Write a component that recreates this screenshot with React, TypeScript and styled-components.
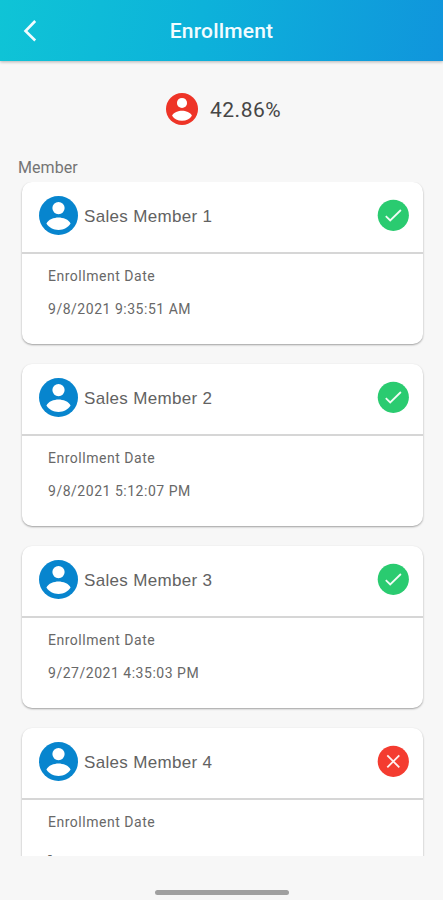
import React from "react";
import styled, { createGlobalStyle } from "styled-components";

const GlobalStyle = createGlobalStyle`
  * { box-sizing: border-box; }
  body { margin: 0; background: #f7f7f7; font-family: Roboto, "Liberation Sans", sans-serif; }
`;

const Screen = styled.div`
  display: flex;
  flex-direction: column;
  width: 443px;
  height: 900px;
  overflow: hidden;
  background: #f7f7f7;
`;

const Header = styled.header`
  display: grid;
  grid-template-columns: 60px 1fr 60px;
  align-items: center;
  flex: none;
  height: 61px;
  background: linear-gradient(100deg, #0fc4d6 0%, #0db2da 45%, #1095dc 100%);
  box-shadow: 0 1px 3px rgba(0, 0, 0, 0.28);
`;

const BackButton = styled.button`
  display: flex;
  width: 60px;
  height: 61px;
  padding: 19px 0 0 23px;
  border: 0;
  background: none;
`;

const Title = styled.h1`
  margin: 1px 0 0;
  color: #f2fcff;
  font-size: 21px;
  font-weight: 500;
  line-height: 24px;
  letter-spacing: 0.2px;
  text-align: center;
`;

const Summary = styled.div`
  display: flex;
  align-items: center;
  gap: 12px;
  flex: none;
  height: 96px;
  padding-left: 166px;
`;

const Percent = styled.span`
  margin-top: 1px;
  color: #464646;
  font-size: 21px;
  line-height: 24px;
  letter-spacing: 0.5px;
`;

const SectionLabel = styled.div`
  flex: none;
  height: 25px;
  padding-left: 18px;
  color: #747474;
  font-size: 16px;
  line-height: 21px;
  letter-spacing: 0.05px;
`;

const List = styled.main`
  display: flex;
  flex-direction: column;
  gap: 20px;
  flex: none;
  height: 674px;
  padding: 0 20px 0 22px;
  overflow: hidden;
`;

const Card = styled.article`
  flex: none;
  height: 162px;
  border-radius: 10px;
  background: #fff;
  box-shadow: 0 1px 2px rgba(0, 0, 0, 0.36);
`;

const CardHead = styled.div`
  display: flex;
  align-items: center;
  height: 72px;
  padding: 0 14px 4px 17px;
  border-bottom: 2px solid #d6d6d6;
`;

const Name = styled.span`
  flex: 1;
  margin: 3px 0 0 6px;
  color: #626262;
  font-family: "Liberation Sans", Arial, sans-serif;
  font-size: 17px;
  line-height: 22px;
  letter-spacing: 0.33px;
`;

const Details = styled.div`
  display: flex;
  flex-direction: column;
  gap: 13px;
  padding: 12px 26px;
  color: #686868;
  font-size: 14px;
  line-height: 20px;
  letter-spacing: 0.52px;
`;

const HomeArea = styled.footer`
  display: flex;
  justify-content: center;
  flex: 1;
  padding-top: 34px;
`;

const HomeBar = styled.div`
  width: 134px;
  height: 5px;
  border-radius: 3px;
  background: #a0a0a0;
`;

const Avatar = ({ size, color }: { size: number; color: string }) => (
  <svg width={size} height={size} viewBox="0 0 40 40">
    <circle cx="20" cy="20" r="20" fill={color} />
    <circle cx="20" cy="12.4" r="6.3" fill="#fff" />
    <path d="M7.6 28.3C9.2 24.2 15.6 22.1 20 22.1s10.8 2.1 12.4 6.2C29.7 32.5 25.4 34.8 20 34.8S10.3 32.5 7.6 28.3Z" fill="#fff" />
  </svg>
);

const Status = ({ enrolled }: { enrolled: boolean }) => (
  <svg width="32" height="32" viewBox="0 0 32 32">
    <circle cx="16.3" cy="16.3" r="15.6" fill={enrolled ? "#2acb70" : "#f43c30"} />
    <path
      d={enrolled ? "M8.8 17.2L13.2 21.4L23.9 11" : "M10.3 10.4L22.3 22.4M22.3 10.4L10.3 22.4"}
      fill="none"
      stroke="#fff"
      strokeOpacity="0.93"
      strokeWidth="1.8"
    />
  </svg>
);

const members = [
  { name: "Sales Member 1", date: "9/8/2021 9:35:51 AM", enrolled: true },
  { name: "Sales Member 2", date: "9/8/2021 5:12:07 PM", enrolled: true },
  { name: "Sales Member 3", date: "9/27/2021 4:35:03 PM", enrolled: true },
  { name: "Sales Member 4", date: "-", enrolled: false },
];

export default function App() {
  return (
    <>
      <GlobalStyle />
      <Screen>
        <Header>
          <BackButton aria-label="Back">
            <svg width="14" height="24" viewBox="0 0 14 24">
              <path d="M12.2 2L2.5 12L12.2 21.5" fill="none" stroke="#f2fcff" strokeWidth="2.6" />
            </svg>
          </BackButton>
          <Title>Enrollment</Title>
        </Header>
        <Summary>
          <Avatar size={32} color="#ee3427" />
          <Percent>42.86%</Percent>
        </Summary>
        <SectionLabel>Member</SectionLabel>
        <List>
          {members.map((m) => (
            <Card key={m.name}>
              <CardHead>
                <Avatar size={39} color="#0785ce" />
                <Name>{m.name}</Name>
                <Status enrolled={m.enrolled} />
              </CardHead>
              <Details>
                <span>Enrollment Date</span>
                <span>{m.date}</span>
              </Details>
            </Card>
          ))}
        </List>
        <HomeArea>
          <HomeBar />
        </HomeArea>
      </Screen>
    </>
  );
}
